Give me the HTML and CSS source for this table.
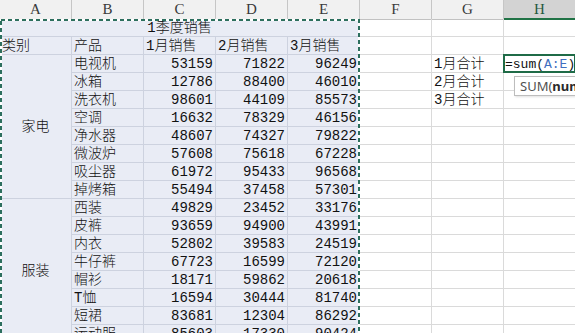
FILE: index.html
```html
<!DOCTYPE html>
<html lang="zh">
<head>
<meta charset="utf-8">
<title>Sheet</title>
<link rel="stylesheet" href="styles.css">
</head>
<body>
<div class="sheet">
  <div class="heads">
    <div class="hd">A</div><div class="hd">B</div><div class="hd">C</div><div class="hd">D</div>
    <div class="hd">E</div><div class="hd">F</div><div class="hd">G</div><div class="hd hd-active">H</div>
  </div>
  <div class="body">
    <div class="sel">
      <div class="c title">1季度销售</div>
      <div class="c">类别</div><div class="c">产品</div><div class="c">1月销售</div><div class="c">2月销售</div><div class="c">3月销售</div>
      <div class="c cat">家电</div>
      <div class="c">电视机</div><div class="c n">53159</div><div class="c n">71822</div><div class="c n">96249</div>
      <div class="c">冰箱</div><div class="c n">12786</div><div class="c n">88400</div><div class="c n">46010</div>
      <div class="c">洗衣机</div><div class="c n">98601</div><div class="c n">44109</div><div class="c n">85573</div>
      <div class="c">空调</div><div class="c n">16632</div><div class="c n">78329</div><div class="c n">46156</div>
      <div class="c">净水器</div><div class="c n">48607</div><div class="c n">74327</div><div class="c n">79822</div>
      <div class="c">微波炉</div><div class="c n">57608</div><div class="c n">75618</div><div class="c n">67228</div>
      <div class="c">吸尘器</div><div class="c n">61972</div><div class="c n">95433</div><div class="c n">96568</div>
      <div class="c">掉烤箱</div><div class="c n">55494</div><div class="c n">37458</div><div class="c n">57301</div>
      <div class="c cat">服装</div>
      <div class="c">西装</div><div class="c n">49829</div><div class="c n">23452</div><div class="c n">33176</div>
      <div class="c">皮裤</div><div class="c n">93659</div><div class="c n">94900</div><div class="c n">43991</div>
      <div class="c">内衣</div><div class="c n">52802</div><div class="c n">39583</div><div class="c n">24519</div>
      <div class="c">牛仔裤</div><div class="c n">67723</div><div class="c n">16599</div><div class="c n">72120</div>
      <div class="c">帽衫</div><div class="c n">18171</div><div class="c n">59862</div><div class="c n">20618</div>
      <div class="c">T恤</div><div class="c n">16594</div><div class="c n">30444</div><div class="c n">81740</div>
      <div class="c">短裙</div><div class="c n">83681</div><div class="c n">12304</div><div class="c n">86292</div>
      <div class="c">运动服</div><div class="c n">85603</div><div class="c n">17330</div><div class="c n">90424</div>
      <svg class="ants" xmlns="http://www.w3.org/2000/svg">
        <rect x="1" y="1" width="358" height="600" fill="none" stroke="#ffffff" stroke-width="2"/>
        <rect x="1" y="1" width="358" height="600" fill="none" stroke="#2d6f5e" stroke-width="2" stroke-dasharray="4 3"/>
      </svg>
    </div>
    <div class="rest">
      <div class="c"></div><div class="c"></div><div class="c"></div>
      <div class="c"></div><div class="c"></div><div class="c"></div>
      <div class="c"></div><div class="c">1月合计</div>
      <div class="c active"><span class="f">=sum(<span class="ref">A:E</span>)</span>
        <div class="tip">SUM(<b>number1</b>, [number2], ...)</div>
      </div>
      <div class="c"></div><div class="c">2月合计</div><div class="c"></div>
      <div class="c"></div><div class="c">3月合计</div><div class="c"></div>
      <div class="c"></div><div class="c"></div><div class="c"></div>
      <div class="c"></div><div class="c"></div><div class="c"></div>
      <div class="c"></div><div class="c"></div><div class="c"></div>
      <div class="c"></div><div class="c"></div><div class="c"></div>
      <div class="c"></div><div class="c"></div><div class="c"></div>
      <div class="c"></div><div class="c"></div><div class="c"></div>
      <div class="c"></div><div class="c"></div><div class="c"></div>
      <div class="c"></div><div class="c"></div><div class="c"></div>
      <div class="c"></div><div class="c"></div><div class="c"></div>
      <div class="c"></div><div class="c"></div><div class="c"></div>
      <div class="c"></div><div class="c"></div><div class="c"></div>
      <div class="c"></div><div class="c"></div><div class="c"></div>
      <div class="c"></div><div class="c"></div><div class="c"></div>
    </div>
  </div>
</div>
</body>
</html>
```
FILE: styles.css
```css
html, body {
  margin: 0;
  padding: 0;
  background: #ffffff;
  overflow: hidden;
  width: 575px;
  height: 333px;
}

.sheet {
  display: flex;
  flex-direction: column;
  width: 576px;
  font-family: "Liberation Mono", "Noto Sans CJK SC", monospace;
  font-size: 14px;
  font-weight: 300;
  color: #111111;
}

.heads {
  display: grid;
  grid-template-columns: repeat(8, 72px);
  height: 19px;
}

.hd {
  box-sizing: border-box;
  background: #f1f1f1;
  border-right: 1px solid #c6c6c6;
  border-bottom: 1px solid #c2c2c2;
  text-align: center;
  line-height: 19px;
  font-family: "Liberation Serif", "DejaVu Serif", serif;
  font-size: 15px;
  font-weight: 400;
  color: #3a3a3a;
}

.hd-active {
  background: #d3d3d3;
  border-bottom: 2px solid #217346;
  color: #1f5a3f;
  line-height: 18px;
}

.body {
  display: flex;
}

.sel {
  position: relative;
  display: grid;
  grid-template-columns: repeat(5, 72px);
  grid-auto-rows: 18px;
}

.rest {
  display: grid;
  grid-template-columns: repeat(3, 72px);
  grid-auto-rows: 18px;
}

.c {
  box-sizing: border-box;
  border-right: 1px solid #dadada;
  border-bottom: 1px solid #dadada;
  padding: 1px 2px 0;
  line-height: 17px;
  white-space: nowrap;
  overflow: visible;
}

.sel .c {
  background: #e9ecf5;
  border-color: #cdd2df;
}

.title {
  grid-column: span 5;
  text-align: center;
}

.cat {
  grid-row: span 8;
  display: flex;
  align-items: center;
  justify-content: center;
}

.n {
  text-align: right;
}

.ants {
  position: absolute;
  inset: 0;
  width: 100%;
  height: 100%;
  pointer-events: none;
}

.active {
  position: relative;
  z-index: 2;
  padding-left: 1px;
}

.active::before {
  content: "";
  position: absolute;
  inset: -1px;
  border: 2px solid #1f6b47;
  pointer-events: none;
}

.f {
  font-size: 13px;
  color: #111111;
}

.ref {
  color: #3f6fc0;
}

.tip {
  position: absolute;
  top: 21px;
  left: 10px;
  height: 20px;
  box-sizing: border-box;
  padding: 0 5px;
  border: 1px solid #bdbdbd;
  background: #ffffff;
  box-shadow: 1px 1px 2px rgba(0, 0, 0, 0.12);
  font-family: "Noto Sans", "Open Sans", sans-serif;
  font-size: 13px;
  font-weight: 400;
  line-height: 18px;
  color: #505050;
  white-space: nowrap;
}

.tip b {
  color: #2a2a2a;
  font-weight: 700;
}
```
